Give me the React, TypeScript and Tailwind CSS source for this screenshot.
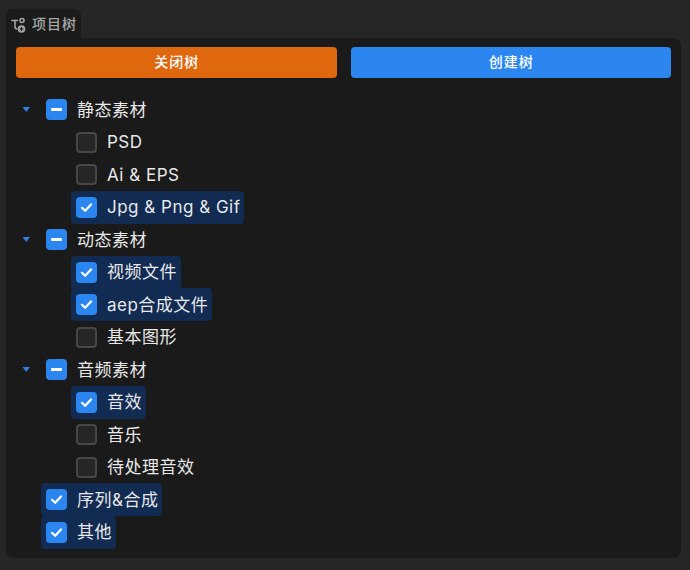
import React from "react";

type Node = { label: string; state: "on" | "off" | "mixed"; level: 0 | 1; arrow?: boolean };

const nodes: Node[] = [
  { label: "静态素材", state: "mixed", level: 0, arrow: true },
  { label: "PSD", state: "off", level: 1 },
  { label: "Ai & EPS", state: "off", level: 1 },
  { label: "Jpg & Png & Gif", state: "on", level: 1 },
  { label: "动态素材", state: "mixed", level: 0, arrow: true },
  { label: "视频文件", state: "on", level: 1 },
  { label: "aep合成文件", state: "on", level: 1 },
  { label: "基本图形", state: "off", level: 1 },
  { label: "音频素材", state: "mixed", level: 0, arrow: true },
  { label: "音效", state: "on", level: 1 },
  { label: "音乐", state: "off", level: 1 },
  { label: "待处理音效", state: "off", level: 1 },
  { label: "序列&合成", state: "on", level: 0 },
  { label: "其他", state: "on", level: 0 },
];

function Box({ state }: { state: Node["state"] }) {
  if (state === "off") {
    return <span className="block w-[21px] h-[21px] shrink-0 rounded-[4px] border-2 border-[#474747] bg-[#262626]" />;
  }
  return (
    <span className="flex items-center justify-center w-[21px] h-[21px] shrink-0 rounded-[4px] bg-[#2b87ef]">
      {state === "mixed" ? (
        <span className="block w-[11px] h-[3px] rounded-[1px] bg-white" />
      ) : (
        <svg width="13" height="13" viewBox="0 0 13 13" fill="none">
          <path d="M2 6.8 L5.2 9.8 L11 3.4" stroke="#fff" strokeWidth="2.2" strokeLinecap="round" strokeLinejoin="round" />
        </svg>
      )}
    </span>
  );
}

function Row({ node }: { node: Node }) {
  return (
    <div className={`flex items-center h-[32.5px] ${node.level === 1 ? "pl-[55px]" : "pl-[25px]"}`}>
      <div className="w-[10px] flex justify-center -ml-[20px] mr-[10px]">
        {node.arrow && (
          <svg width="9" height="7" viewBox="0 0 9 7">
            <path d="M0.5 1 H8 L4.25 6 Z" fill="#2f7fe0" />
          </svg>
        )}
      </div>
      <div className={`flex items-center h-[33px] pl-[5px] pr-[4px] rounded-[4px] ${node.state === "on" ? "bg-[#112b53]" : ""}`}>
        <Box state={node.state} />
        <span
          className="ml-[10px] text-[17px] leading-[24px] tracking-[0.5px] text-[#e8e8e8] whitespace-nowrap"
          style={{ fontFamily: 'Inter, "Noto Sans CJK SC", sans-serif' }}
        >
          {node.label}
        </span>
      </div>
    </div>
  );
}

export default function App() {
  return (
    <div
      className="w-[690px] h-[570px] bg-[#262626] overflow-hidden pt-[9px] px-[6px] pr-[9px]"
      style={{ fontFamily: '"Liberation Sans", "Noto Sans CJK SC", sans-serif' }}
    >
      <div className="flex items-center gap-[3px] w-[75px] h-[29px] pl-[5px] rounded-t-[6px] bg-[#1b1b1b]">
        <svg width="18" height="18" viewBox="0 0 18 18" fill="none" stroke="#a6a6a6" strokeWidth="1.5" className="shrink-0">
          <path d="M1 5.5 H6.5" strokeLinecap="round" />
          <path d="M4 5.5 V11.5 Q4 14 6 14" strokeLinecap="round" />
          <circle cx="11" cy="5.5" r="2" />
          <circle cx="10.5" cy="14" r="3.8" fill="#a6a6a6" stroke="none" />
          <path d="M8.5 14 H12.5 M10.5 12 V16" stroke="#1b1b1b" strokeWidth="1.2" />
        </svg>
        <span className="text-[14px] leading-[20px] tracking-[1px] font-medium text-[#a6a6a6] whitespace-nowrap">项目树</span>
      </div>
      <div className="h-[520px] rounded-b-[8px] rounded-tr-[8px] bg-[#1a1a1a] pt-[9px] px-[10px]">
        <div className="flex gap-[14px]">
          <button className="flex-1 h-[31px] pl-[1px] rounded-[4px] bg-[#df670d] text-[14px] tracking-[1px] font-medium text-white">关闭树</button>
          <button className="flex-1 h-[31px] pl-[1px] rounded-[4px] bg-[#2b87ef] text-[14px] tracking-[1px] font-medium text-white">创建树</button>
        </div>
        <div className="mt-[15.4px]">
          {nodes.map((n) => (
            <Row key={n.label} node={n} />
          ))}
        </div>
      </div>
    </div>
  );
}
